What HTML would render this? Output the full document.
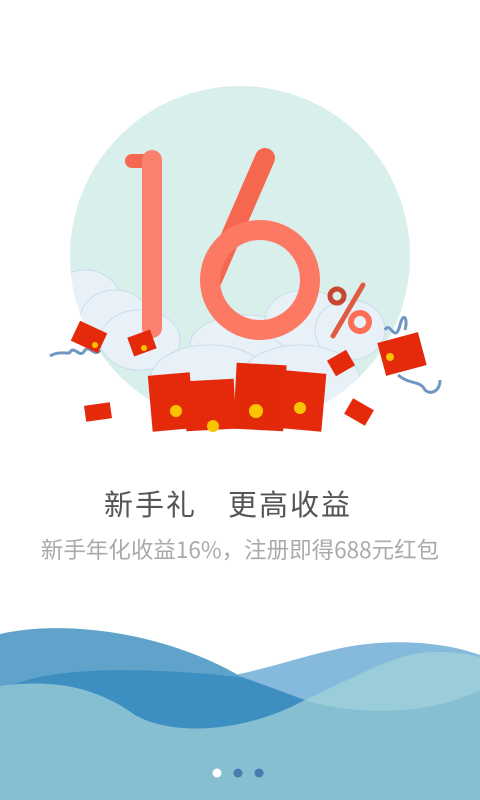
<!DOCTYPE html>
<html><head><meta charset="utf-8"><style>
html,body{margin:0;padding:0;background:#fff;width:480px;height:800px;overflow:hidden;position:relative;font-family:"Noto Sans CJK SC","Liberation Sans",sans-serif}
.t1{position:absolute;top:482px;left:-12px;width:480px;text-align:center;font-size:29px;color:#555;letter-spacing:2px;white-space:nowrap}
.t2{position:absolute;top:533px;left:0;width:480px;text-align:center;font-size:22.5px;color:#aaa;white-space:nowrap}
svg{position:absolute;left:0;top:0}
</style></head><body>
<svg width="480" height="800" viewBox="0 0 480 800">
<defs>
<clipPath id="c"><circle cx="240" cy="256" r="170"/></clipPath>
</defs>
<circle cx="240" cy="256" r="170" fill="#d9efeb"/>
<g clip-path="url(#c)">
<g fill="#e9f1f8" stroke="#c9dcea" stroke-width="1">
<ellipse cx="85" cy="300" rx="35" ry="30"/>
<ellipse cx="115" cy="320" rx="35" ry="30"/>
<ellipse cx="140" cy="340" rx="40" ry="30"/>
<ellipse cx="245" cy="345" rx="55" ry="30"/>
<ellipse cx="305" cy="320" rx="40" ry="30"/>
<ellipse cx="350" cy="330" rx="35" ry="30"/>
<ellipse cx="210" cy="380" rx="60" ry="35"/>
<ellipse cx="300" cy="380" rx="60" ry="35"/>
</g>
</g>
<path d="M132 161 H148" stroke="#f5674f" stroke-width="14" stroke-linecap="round"/>
<line x1="152" y1="160" x2="152" y2="328" stroke="#f9816e" stroke-width="20" stroke-linecap="round"/>
<line x1="265" y1="158" x2="212" y2="280" stroke="#f5674f" stroke-width="20" stroke-linecap="round"/>
<circle cx="260" cy="280" r="50" fill="none" stroke="#fc7a64" stroke-width="20"/>
<line x1="363" y1="285" x2="333" y2="336" stroke="#e05a42" stroke-width="5" stroke-linecap="round"/>
<circle cx="337" cy="296" r="7" fill="none" stroke="#c8452f" stroke-width="5"/>
<circle cx="360" cy="322" r="9" fill="none" stroke="#fc6f56" stroke-width="6"/>
<path d="M50 356 C60 350 70 355 70 352 C75 345 80 360 85 350 C90 345 95 358 100 350" fill="none" stroke="#6f97c2" stroke-width="3"/>
<path d="M385 330 C390 320 395 345 400 325 C404 310 408 320 405 330 M398 375 C410 385 420 380 425 390 C430 395 440 392 440 380" fill="none" stroke="#6f97c2" stroke-width="3"/>
<g>
<rect x="150" y="374" width="42" height="56" fill="#e52a0c" transform="rotate(-5 171 400)"/>
<rect x="185" y="380" width="50" height="50" fill="#e52a0c" transform="rotate(-3 210 405)"/>
<rect x="235" y="364" width="50" height="66" fill="#e22a0b" transform="rotate(3 260 395)"/>
<rect x="282" y="372" width="42" height="58" fill="#e52a0c" transform="rotate(5 303 400)"/>
<circle cx="176" cy="411" r="6" fill="#f8c400"/>
<circle cx="256" cy="411" r="7" fill="#f8c400"/>
<circle cx="300" cy="408" r="6" fill="#f8c400"/>
<circle cx="213" cy="426" r="6" fill="#f8c400"/>
<rect x="74" y="326" width="30" height="22" fill="#e52a0c" transform="rotate(25 89 337)"/>
<circle cx="95" cy="345" r="3" fill="#f8c400"/>
<rect x="130" y="333" width="24" height="20" fill="#e52a0c" transform="rotate(-20 142 343)"/>
<circle cx="144" cy="348" r="3" fill="#f8c400"/>
<rect x="85" y="404" width="26" height="16" fill="#e52a0c" transform="rotate(-8 98 412)"/>
<rect x="330" y="354" width="22" height="18" fill="#e52a0c" transform="rotate(-30 341 363)"/>
<rect x="347" y="403" width="24" height="18" fill="#e52a0c" transform="rotate(30 359 412)"/>
<rect x="381" y="337" width="42" height="34" fill="#e52a0c" transform="rotate(-15 402 354)"/>
<circle cx="390" cy="357" r="4" fill="#f8c400"/>
</g>
<path d="M230 676 C270 668 300 657 333 650 C380 638 440 640 480 655 L480 800 L230 800Z" fill="#86badc"/>
<path d="M0 634 C60 620 160 630 240 676 L305 700 L0 700Z" fill="#5fa3ca"/>
<path d="M305 700 C360 675 400 650 440 652 C460 652 470 655 480 657 L480 800 L305 800Z" fill="#9acdd9"/>
<path d="M10 686 C60 665 150 668 240 677 C265 685 285 693 305 700 L305 800 L0 800Z" fill="#3e8fc1"/>
<path d="M0 686 C60 678 100 690 135 715 C170 735 240 735 305 700 C340 712 420 720 480 690 L480 800 L0 800Z" fill="#85bfd1"/>
<circle cx="217" cy="773" r="4.5" fill="#fff"/>
<circle cx="238" cy="773" r="4.5" fill="#4a7bb0"/>
<circle cx="259" cy="773" r="4.5" fill="#4a7bb0"/>
</svg>
<div class="t1">新手礼　更高收益</div>
<div class="t2">新手年化收益16%，注册即得688元红包</div>
</body></html>
